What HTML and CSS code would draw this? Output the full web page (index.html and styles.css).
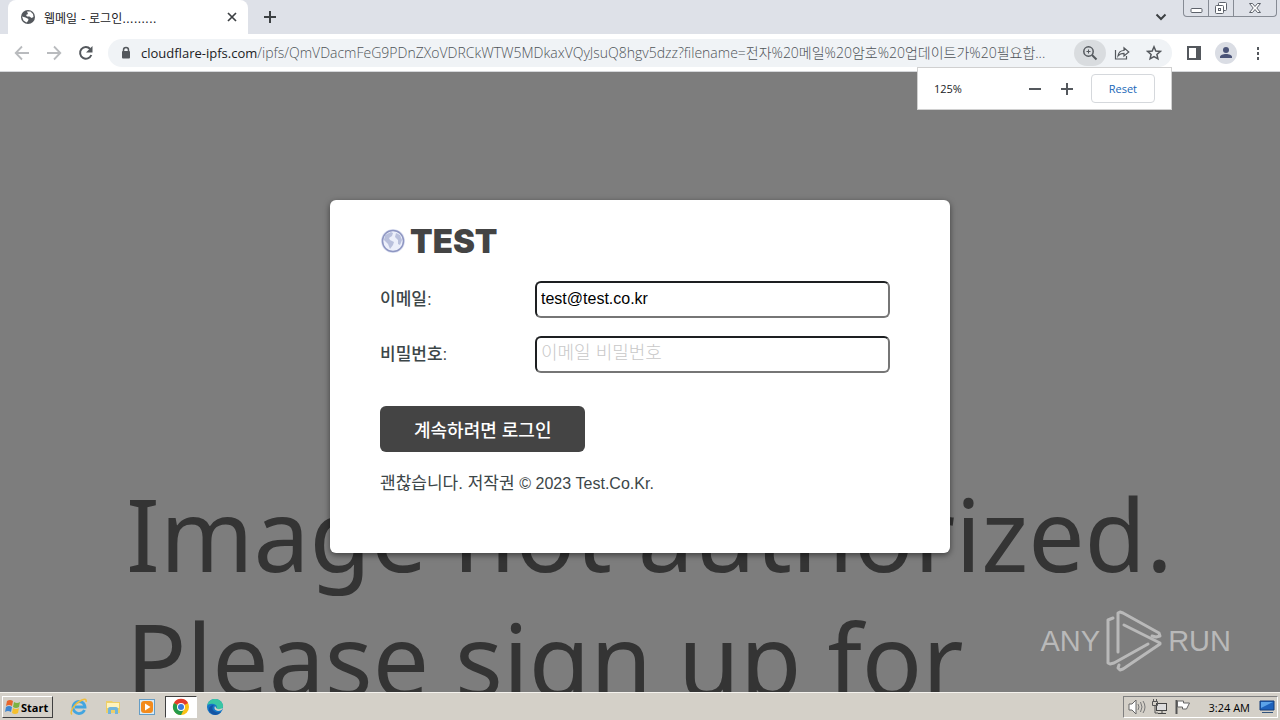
FILE: index.html
```html
<!DOCTYPE html>
<html lang="ko">
<head>
<meta charset="utf-8">
<meta name="viewport" content="width=device-width, initial-scale=1">
<title>웹메일 - 로그인.........</title>
<link rel="stylesheet" href="styles.css">
</head>
<body>
<div class="screen">
  <header class="tabstrip">
    <div class="tab">
      <svg class="globe" width="16" height="16" viewBox="0 0 16 16"><circle cx="8" cy="8" r="7" fill="#54585d"/><path d="M7 2.500 10.500 2.500 13 5 13.500 8 11.500 9 9.500 7.500 7 7.500 6 6 8 5zM2 7.500 5.500 8.500 8.500 10 8 12 6.500 13.500 3.500 11.500z" fill="#fff"/></svg>
      <span class="tab-title">웹메일 - 로그인.........</span>
      <button class="icon-btn tab-close" aria-label="Close tab"><svg width="10" height="10" viewBox="0 0 10 10"><path d="M1 1l8 8M9 1l-8 8" stroke="#3c4043" stroke-width="1.700"/></svg></button>
    </div>
    <button class="icon-btn new-tab" aria-label="New tab"><svg width="12" height="12" viewBox="0 0 12 12"><path d="M6 0v12M0 6h12" stroke="#3c4043" stroke-width="2"/></svg></button>
    <button class="icon-btn tab-search" aria-label="Search tabs"><svg width="12" height="8" viewBox="0 0 12 8"><path d="M1.500 1.500 6 6l4.500-4.500" fill="none" stroke="#3c4043" stroke-width="2"/></svg></button>
    <div class="window-controls">
      <button class="win-btn" aria-label="Minimize"><svg width="13" height="16" viewBox="0 0 13 16"><rect x="1" y="8.500" width="11" height="4" rx="1" fill="#fff" stroke="#5d626b"/></svg></button>
      <button class="win-btn" aria-label="Restore"><svg width="14" height="16" viewBox="0 0 14 16"><rect x="4.500" y="2.500" width="8" height="8" rx="1" fill="#fff" stroke="#5d626b"/><rect x="1.500" y="5.500" width="8" height="8" rx="1" fill="#fff" stroke="#5d626b"/><rect x="4.500" y="8.500" width="2" height="2" fill="none" stroke="#5d626b"/></svg></button>
      <button class="win-btn win-close" aria-label="Close"><svg width="12" height="16" viewBox="0 0 12 16"><path d="M.5 3.500h3L6 6.500l2.500-3h3L7.800 8l3.700 4.500h-3L6 9.500l-2.500 3h-3L4.200 8z" fill="#fff" stroke="#5d626b"/></svg></button>
    </div>
  </header>

  <div class="toolbar">
    <button class="icon-btn" aria-label="Back"><svg width="16" height="16" viewBox="0 0 16 16"><path d="M15 8H2M8 1.500 1.700 8 8 14.500" fill="none" stroke="#b9bbbe" stroke-width="1.800"/></svg></button>
    <button class="icon-btn" aria-label="Forward"><svg width="16" height="16" viewBox="0 0 16 16"><path d="M1 8h13M8 1.500 14.300 8 8 14.500" fill="none" stroke="#b9bbbe" stroke-width="1.800"/></svg></button>
    <button class="icon-btn" aria-label="Reload"><svg width="16" height="16" viewBox="0 0 16 16"><path d="M13.300 10A5.800 5.800 0 1 1 12.200 4" fill="none" stroke="#54585d" stroke-width="2"/><path d="M14.500 1v6.500H8z" fill="#54585d"/></svg></button>
    <div class="address">
      <svg class="lock" width="10" height="14" viewBox="0 0 10 14"><path d="M2.500 6V4a2.500 2.500 0 0 1 5 0v2" fill="none" stroke="#54585d" stroke-width="1.500"/><rect x="1" y="5" width="8" height="7.500" rx="1" fill="#54585d"/></svg>
      <div class="url" role="textbox" aria-label="Address" contenteditable="true" spellcheck="false"><span class="domain">cloudflare-ipfs.com</span>/ipfs/QmVDacmFeG9PDnZXoVDRCkWTW5MDkaxVQyJsuQ8hgv5dzz?filename=전자%20메일%20암호%20업데이트가%20필요합...</div>
      <button class="icon-btn zoom-btn" aria-label="Zoom"><svg width="16" height="16" viewBox="0 0 16 16"><circle cx="6.500" cy="6.500" r="4.700" fill="none" stroke="#54585d" stroke-width="1.500"/><path d="M10 10l4.500 4.500" stroke="#54585d" stroke-width="2"/><path d="M6.500 4.500v4M4.500 6.500h4" stroke="#54585d"/></svg></button>
      <button class="icon-btn pill-btn" aria-label="Share"><svg width="16" height="16" viewBox="0 0 16 16"><path d="M1.500 5v9h11v-3" fill="none" stroke="#54585d" stroke-width="1.200"/><path d="M4 11c.5-4 2.500-5.500 6-5.500V2.800L14.800 7 10 11V8.300C7.500 8.300 5.500 9 4 11z" fill="none" stroke="#54585d" stroke-width="1.200"/></svg></button>
      <button class="icon-btn pill-btn" aria-label="Bookmark"><svg width="16" height="16" viewBox="0 0 16 16"><path d="M8 1.800l1.800 4.200 4.500.4-3.400 3 1 4.400L8 11.500l-3.900 2.300 1-4.400-3.400-3 4.500-.4z" fill="none" stroke="#54585d" stroke-width="1.500"/></svg></button>
    </div>
    <div class="toolbar-end">
      <button class="icon-btn" aria-label="Side panel"><svg width="16" height="16" viewBox="0 0 16 16"><rect x="2" y="2" width="12" height="12" fill="none" stroke="#54585d" stroke-width="2"/><path d="M10 2h5v12h-5z" fill="#54585d"/></svg></button>
      <button class="icon-btn" aria-label="Profile"><svg width="22" height="22" viewBox="0 0 22 22"><circle cx="11" cy="11" r="11" fill="#dadde4"/><circle cx="11" cy="8" r="3" fill="#4b5478"/><path d="M5 16v-1c0-2 3-3 6-3s6 1 6 3v1z" fill="#4b5478"/></svg></button>
      <button class="icon-btn" aria-label="Menu"><svg width="16" height="16" viewBox="0 0 16 16"><path d="M7 2h2v3H7zM7 7h2v3H7zM7 12h2v3H7z" fill="#54585d"/></svg></button>
    </div>
    <div class="zoom-popup">
      <span class="zoom-value">125%</span>
      <button class="icon-btn" aria-label="Zoom out"><svg width="12" height="12" viewBox="0 0 12 12"><path d="M0 6h12" stroke="#54585d" stroke-width="2"/></svg></button>
      <button class="icon-btn" aria-label="Zoom in"><svg width="12" height="12" viewBox="0 0 12 12"><path d="M0 6h12M6 0v12" stroke="#54585d" stroke-width="2"/></svg></button>
      <button class="reset">Reset</button>
    </div>
  </div>

  <main class="page">
    <div class="backdrop"><div>Image not authorized.</div><div>Please sign up for</div></div>
    <form class="card">
      <h1 class="brand">
        <svg width="26" height="26" viewBox="0 0 26 26"><circle cx="13" cy="13" r="12" fill="#dfe3f3"/><circle cx="13" cy="13" r="10.500" fill="#eceffa" stroke="#8e96c2" stroke-width="1.500"/><path d="M5 7l6-3 2 1-1 3-3 2 1 2 4 2-1 3-3 4-2-5-4-4z" fill="#b9c0dc"/><path d="M16 5l4 2 2 5-2 5-2-1v-4l-3-3z" fill="#b9c0dc"/></svg>
        <span>TEST</span>
      </h1>
      <div class="field"><label for="email">이메일:</label><input id="email" type="email" value="test@test.co.kr"></div>
      <div class="field"><label for="password">비밀번호:</label><input id="password" type="password" placeholder="이메일 비밀번호"></div>
      <button class="login" type="button">계속하려면 로그인</button>
      <p class="copyright">괜찮습니다. 저작권 <span>© 2023 Test.Co.Kr.</span></p>
    </form>
    <div class="watermark">
      <span>ANY</span>
      <svg width="56" height="62" viewBox="0 0 56 62" fill="none" stroke="#b9b9b9" stroke-width="3" stroke-linejoin="round" stroke-linecap="round"><path d="M7 8 2 10v43l2 1 4-1 34-19"/><path d="M12 42V3l2-1 3 1 36 20 1 3-4 1-4-1"/><path d="M18 15l36 18v1L17 59l-3 1-2-2 1-3"/></svg>
      <span>RUN</span>
    </div>
  </main>

  <footer class="taskbar">
    <button class="start"><svg width="17" height="16" viewBox="0 0 17 16"><path d="M3 2q3-2 6 0L8 7Q5 5 2 7z" fill="#e8662b"/><path d="M10 3q3 2 6 0l-1 5q-3 2-6 0z" fill="#7cb342"/><path d="M2 8q3-2 6 0l-1 5q-3-2-6 0z" fill="#3f86d0"/><path d="M9 9q3 2 6 0l-1 5q-3 2-6 0z" fill="#f6c02c"/></svg><span>Start</span></button>
    <nav class="quick">
      <button class="task" aria-label="Internet Explorer"><svg width="18" height="18" viewBox="0 0 18 18"><path d="M14.500 12A6 6 0 1 1 15 9H5" fill="none" stroke="#42a5e0" stroke-width="2.800"/><path d="M2 16.500C-1 14 5 5 12 2q5-2 4 2" fill="none" stroke="#efbd3e" stroke-width="1.500"/></svg></button>
      <button class="task" aria-label="Explorer"><svg width="18" height="18" viewBox="0 0 18 18"><path d="M2 3h6l1 1h7v11H2z" fill="#edcf69"/><path d="M3 5h12v5H3z" fill="#fff3bd"/><path d="M4 16v-5q0-2 2-2h6q2 0 2 2v5h-3v-4H7v4z" fill="#72b5dc"/></svg></button>
      <button class="task" aria-label="Media Player"><svg width="18" height="18" viewBox="0 0 18 18"><rect x="1.500" y="1.500" width="15" height="15" fill="#d8ebf8" stroke="#659dc5"/><rect x="3" y="3" width="12" height="12" rx="3" fill="#f28b1d"/><path d="M7 5.500v7L12.500 9z" fill="#fff"/></svg></button>
      <button class="task active" aria-label="Chrome"><svg width="18" height="18" viewBox="0 0 18 18"><circle cx="9" cy="9" r="8" fill="#fbc116"/><path d="M9 9 2 5A8 8 0 0 1 16 5z" fill="#e33b2e"/><path d="M2 5A8 8 0 0 0 9 17l3-6-3-2z" fill="#259b4b"/><circle cx="9" cy="9" r="4" fill="#fff"/><circle cx="9" cy="9" r="3" fill="#3979dd"/></svg></button>
      <button class="task" aria-label="Edge"><svg width="18" height="18" viewBox="0 0 18 18"><circle cx="9" cy="9" r="8" fill="#1476c6"/><path d="M1.500 7C3-1 15-1 17 7c1 5-5 6-7 4 3-4-3-7-8.500-4z" fill="#39c6a4"/><path d="M8 7c-4 3 0 9 7 7q-3 4-8 2.500C1 14 2 7 8 7z" fill="#1554a3"/><path d="M9 8q-2 4 3 5 4 0 5-3-4 2-6.500.5z" fill="#d6d2c9"/></svg></button>
    </nav>
    <div class="tray">
      <svg width="18" height="16" viewBox="0 0 18 16"><path d="M1 5h3l4-4v14l-4-4H1z" fill="#fff" stroke="#666"/><path d="M10 5q2 3 0 6M12.500 3q3 5 0 10M15 2q4 6 0 12" fill="none" stroke="#777"/></svg>
      <svg width="18" height="16" viewBox="0 0 18 16"><rect x="5.500" y="4.500" width="10" height="7" fill="#ddd" stroke="#444"/><path d="M7 14.500h8M11 12v2" stroke="#444"/><path d="M1.500 2.500h5v4h-5zM4 7v7h3M2.500 0v2M5.500 0v2" fill="none" stroke="#555"/></svg>
      <svg width="18" height="16" viewBox="0 0 18 16"><path d="M2.500 1v14" stroke="#555" stroke-width="2"/><path d="M3.500 2h6v2h6l-3 6h-4V8h-5z" fill="#fff" stroke="#666"/></svg>
      <time>3:24 AM</time>
      <svg width="16" height="14" viewBox="0 0 16 14"><path d="M1 1h14v9H1z" fill="#1d62bc" stroke="#153c78"/><path d="M2 2h12L2 8z" fill="#5ba3e8"/><path d="M3 12.500h11" stroke="#31537c"/></svg>
    </div>
  </footer>
</div>
</body>
</html>
```

FILE: styles.css
```css
* { box-sizing: border-box; }
body { margin: 0; font-family: "Open Sans", "Noto Sans CJK KR", sans-serif; color: #202124; }
button { font: inherit; cursor: pointer; }
svg { display: block; flex: none; }
.screen { display: flex; flex-direction: column; height: 100vh; overflow: hidden; }
.icon-btn { display: flex; align-items: center; justify-content: center; flex: none; padding: 0; border: 0; background: none; }

.tabstrip { display: flex; align-items: center; height: 34px; flex: none; padding-left: 8px; background: #dee1e8; }
.tab { display: flex; align-items: center; gap: 8px; width: 240px; height: 34px; padding: 0 11px 0 12px; border-radius: 8px 8px 0 0; background: #fff; }
.tab-title { flex: 1; font-family: "DejaVu Sans", "Noto Sans CJK KR", sans-serif; font-size: 12px; white-space: nowrap; }
.new-tab { margin-left: 16px; }
.tab-search { margin-left: auto; margin-right: 16px; }
.window-controls { display: flex; align-self: flex-start; height: 17px; margin-right: 3px; border: 1px solid #868b94; border-top: 0; border-radius: 0 0 4px 4px; }
.win-btn { display: flex; align-items: center; justify-content: center; width: 25px; padding: 0; border: 0; border-right: 1px solid #868b94; background: none; }
.win-close { width: 42px; border-right: 0; }

.toolbar { position: relative; z-index: 2; display: flex; align-items: center; gap: 16px; height: 38px; flex: none; padding: 0 14px; border-bottom: 1px solid #d5d7da; background: #fff; }
.toolbar-end { display: flex; align-items: center; gap: 13px; }
.address { display: flex; align-items: center; flex: 1; min-width: 0; height: 28px; margin: 0 -2px; padding-right: 2px; border-radius: 14px; background: #f0f3f6; }
.lock { margin: 0 10px 0 13px; }
.url { flex: 1; min-width: 0; overflow: hidden; white-space: nowrap; font-family: "Open Sans", "Noto Sans CJK KR", sans-serif; font-size: 14px; font-weight: 300; line-height: 20px; color: #4f5358; outline: 0; }
.domain { font-size: 13px; font-weight: 400; color: #202124; }
.zoom-btn { width: 32px; height: 26px; border-radius: 13px; background: #d9dcdf; }
.pill-btn { width: 32px; height: 26px; }
.zoom-popup { position: absolute; top: 33px; right: 108px; display: flex; align-items: center; gap: 20px; width: 255px; height: 43px; padding: 0 16px; border: 1px solid #d0d0d0; background: #fff; font-size: 11px; }
.zoom-value { flex: 1; }
.reset { height: 29px; margin-left: -2px; padding: 0 17px; border: 1px solid #d5d8dc; border-radius: 4px; background: #fff; color: #1967b8; }

.page { position: relative; flex: 1; min-height: 0; overflow: hidden; padding-top: 128px; background: #7d7d7d; }
.backdrop { position: absolute; top: 399px; left: 126px; font-family: "Noto Sans", sans-serif; font-size: 100px; line-height: 125px; color: #343434; white-space: nowrap; }
.card { position: relative; width: 100%; max-width: 620px; margin: 0 auto; padding: 24px 60px 56px 50px; border-radius: 6px; background: #fff; box-shadow: 0 2px 6px rgba(0, 0, 0, .5); font-family: "Liberation Sans", "Noto Sans CJK KR", sans-serif; color: #3c4648; }
.brand { display: flex; align-items: center; gap: 4px; margin: 0 0 23px; font-family: Inter, sans-serif; font-size: 33px; font-weight: 900; line-height: 34px; color: #444; }
.field { display: flex; align-items: center; margin-bottom: 18px; font-size: 17px; font-weight: 500; }
.field label { width: 155px; padding-bottom: 4px; }
.field input { flex: 1; min-width: 0; height: 37px; padding: 0 4px 1px; border: 2px solid; border-color: #1d1f21 #767676 #767676 #1d1f21; border-radius: 6px; background: #fff; font: 16px "Liberation Sans", "Noto Sans CJK KR", sans-serif; color: #000; outline: 0; }
.field input::placeholder { font-size: 18px; font-weight: 300; color: #c8c8c8; opacity: 1; }
.login { display: block; height: 46px; margin-top: 33px; padding: 0 34px; border: 0; border-radius: 6px; background: #444; color: #fff; font-size: 18px; font-weight: 500; }
.copyright { margin: 19px 0 0; font-size: 17px; line-height: 26px; }
.copyright span { font-size: 16px; }
.watermark { position: absolute; right: 49px; bottom: 20px; display: flex; align-items: center; gap: 6px; font-family: "Liberation Sans", sans-serif; font-size: 29px; line-height: 62px; color: #b9b9b9; }

.taskbar { display: flex; align-items: center; flex: none; height: 28px; padding: 1px 2px 0; border-top: 1px solid #f4f2ed; background: #d4d0c8; color: #000; }
.start { display: flex; align-items: center; height: 22px; padding: 0 4px 0 1px; border: 1px solid; border-color: #fff #404040 #404040 #fff; background: #d4d0c8; font-size: 11px; font-weight: 700; }
.quick { display: flex; gap: 2px; margin-left: 10px; }
.task { display: flex; align-items: center; justify-content: center; width: 32px; height: 22px; padding: 0; border: 0; background: none; }
.task.active { border: 1px solid; border-color: #404040 #fff #fff #404040; background: #fff; }
.tray { display: flex; align-items: center; gap: 5px; height: 22px; margin-left: auto; padding: 0 2px 0 4px; border: 1px solid; border-color: #808080 #fff #fff #808080; font-size: 11px; }
.tray time { margin: 0 4px 0 12px; white-space: nowrap; }
```
